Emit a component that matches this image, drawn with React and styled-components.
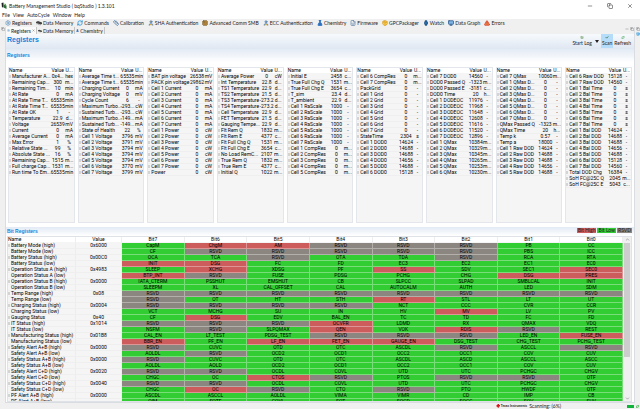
import { useState } from 'react'
import styled, { createGlobalStyle } from 'styled-components'
import {
  Settings, RefreshCw, Check, ChevronUp, ChevronDown, Minus, Copy, X,
  Ruler, User, Cpu, FlaskConical, FileCode, Package, Watch, Monitor, TriangleAlert, Sheet, Chrome
} from 'lucide-react'

const GlobalStyle = createGlobalStyle`
  * { box-sizing: border-box; }
  body {
    margin: 0;
    background: #fff;
    color: #222;
    font-family: 'Lato', 'Liberation Sans', sans-serif;
    font-size: 5px;
    line-height: 6px;
  }
  button {
    font: inherit;
    color: inherit;
    border: 0;
    padding: 0;
    background: none;
    white-space: nowrap;
  }
`

const MemoryIcon = () => (
  <svg width='6' height='6' viewBox='0 0 12 12'>
    <path d='M0 4 L4 2 L12 5 L12 8 L9 9 L0 6Z' fill='#444' />
    <path d='M2 6v3M5 7v3M8 8v3' stroke='#777' strokeWidth='1' />
  </svg>
)

const menus = ['File', 'View', 'AutoCycle', 'Window', 'Help']

const tools = [
  { name: 'Registers', icon: Settings, color: '#6d9cc4' },
  { name: 'Data Memory', icon: MemoryIcon },
  { name: 'Commands', icon: RefreshCw, color: '#1e90d8' },
  { name: 'Calibration', icon: Ruler, color: '#3f6f9f' },
  { name: 'SHA Authentication', icon: User, color: '#3a7bd0', fill: '#f0b93a' },
  { name: 'Advanced Comm SMB', icon: Cpu, color: '#80602a', fill: '#e0a850' },
  { name: 'ECC Authentication', icon: User, color: '#3a7bd0', fill: '#f0b93a' },
  { name: 'Chemistry', icon: FlaskConical, color: '#2a6fc0', fill: '#2a6fc0' },
  { name: 'Firmware', icon: FileCode, color: '#6a8aa8' },
  { name: 'GPCPackager', icon: Package, color: '#d79b1e', fill: '#ffd860' },
  { name: 'Watch', icon: Watch, color: '#1f4f80', fill: '#2a77b8' },
  { name: 'Data Graph', icon: Monitor, color: '#25568c', fill: '#7fb4e4' },
  { name: 'Errors', icon: TriangleAlert, color: '#d23a20', fill: '#f08a50' }
]

const cells = (from, to, suffix, value, unit) => {
  const rows = []
  for (let i = from; i <= to; i++) {
    rows.push([`Cell ${i} ${suffix}`, Array.isArray(value) ? value[i - from] : value, unit])
  }
  return rows
}

const panels = [
  [
    ['Manufacturer A...', '0x4...', 'hex'], ['Remaining Cap...', '300', 'm...'], ['Remaining Tim...', '10', 'min'],
    ['At Rate', '0', 'mA'], ['At Rate Time T...', '65535', 'min'], ['At Rate Time T...', '65535', 'min'],
    ['At Rate OK', '1', '-'], ['Temperature', '22.9', 'd...'], ['Voltage', '26539', 'mV'], ['Current', '0', 'mA'],
    ['Average Current', '0', 'mA'], ['Max Error', '1', '%'], ['Relative State ...', '99', '%'],
    ['Absolute State ...', '16', '%'], ['Remaining Cap...', '1515', 'm...'], ['Full charge Cap...', '1531', 'm...'],
    ['Run time To Em...', '65535', 'min']
  ],
  [
    ['Average Time t...', '65535', 'min'], ['Average Time t...', '65535', 'min'], ['Charging Current', '0', 'mA'],
    ['Charging Voltage', '0', 'mV'], ['Cycle Count', '6', '-'], ['Maximum Turbo...', '-293...', 'cW'],
    ['Sustained Turb...', '-293...', 'cW'], ['Maximum Turbo...', '-149...', 'mA'], ['Sustained Turb...', '-149...', 'mA'],
    ['State of Health', '22', '%'],
    ...cells(1, 7, 'Voltage', ['3796', '3791', '3794', '3794', '3794', '3770', '3799'], 'mV')
  ],
  [
    ['BAT pin voltage', '26538', 'mV'], ['PACK pin voltage', '29862', 'mV'],
    ...cells(1, 7, 'Current', '0', 'mA'), ...cells(1, 7, 'Power', '0', 'cW'), ['Power', '0', 'cW']
  ],
  [
    ['Average Power', '0', 'cW'], ['Int Temperature', '22.8', 'd...'], ['TS1 Temperature', '22.9', 'd...'],
    ['TS2 Temperature', '21.5', 'd...'], ['TS3 Temperature', '-273.2', 'd...'], ['TS4 Temperature', '-273.2', 'd...'],
    ['Cell Temperature', '22.9', 'd...'], ['FET Temperature', '21.5', 'd...'], ['Gauging Tempe...', '22.9', 'd...'],
    ['Flt Rem Q', '1832', 'm...'], ['Flt Rem E', '4377', 'c...'], ['Flt Full Chg Q', '1531', 'm...'],
    ['Flt Full Chg E', '3654', 'c...'], ['No Load RemC...', '2107', 'm...'], ['True Rem Q', '1832', 'm...'],
    ['True Rem E', '4377', 'c...'], ['Initial Q', '1022', 'm...']
  ],
  [
    ['Initial E', '2458', 'c...'], ['True Full Chg Q', '1531', 'm...'], ['True Full Chg E', '3654', 'c...'],
    ['T_sim', '23.4', 'd...'], ['T_ambient', '22.9', 'd...'],
    ...cells(1, 7, 'RaScale', '1000', '-'), ...cells(1, 5, 'CompRes', '0', 'm...')
  ],
  [
    ...cells(6, 7, 'CompRes', '0', 'm...'), ['PackGrid', '0', '-'], ...cells(1, 7, 'Grid', '0', '-'),
    ['StateTime', '2304', 's'],
    ...cells(1, 6, 'DOD0', ['14624', '14688', '14688', '14656', '14688', '15128'], '-')
  ],
  [
    ['Cell 7 DOD0', '14560', '-'], ['DOD0 Passed Q', '-1323', 'm...'], ['DOD0 Passed E', '-3181', 'c...'],
    ['DOD0 Time', '20', 'h...'],
    ...cells(1, 7, 'DODEOC', ['11976', '11968', '11648', '12608', '11616', '11520', '12896'], '-'),
    ...cells(1, 6, 'QMax', ['10384', '10329', '10345', '10265', '10253', '10230'], 'm...')
  ],
  [
    ['Cell 7 QMax', '10060', 'm...'], ...cells(1, 7, 'QMax D...', '0', '-'), ['QMax Passed Q', '-1323', 'm...'],
    ['QMax Time', '20', 'h...'], ['Temp k', '0.57', '-'], ['Temp a', '18000', '-'],
    ...cells(1, 5, 'Raw DOD', ['14624', '14688', '14688', '14656', '14688'], '-')
  ],
  [
    ...cells(6, 7, 'Raw DOD', ['15128', '14560'], '-'), ...cells(1, 7, 'Bal Time', '0', 's'),
    ...cells(1, 7, 'Bal DOD', ['14624', '14688', '14688', '14656', '14688', '15128', '14560'], '-'),
    ['Total DOD Chg', '16384', '-'], ['SoH FC@25C Q', '2045', 'm...'], ['SoH FC@25C E', '5043', 'c...']
  ]
]

// a leading ! marks a bit that is set
const bitRows = [
  ['Battery Mode (high)', '0x6000', 'CapM !ChgM !AM RSVD RSVD RSVD PB CC'],
  ['Battery Mode (low)', '', 'CF RSVD RSVD RSVD RSVD RSVD PBS ICC'],
  ['Battery Status (high)', '0x00C0', 'OCA TCA RSVD OTA TDA RSVD RCA RTA'],
  ['Battery Status (low)', '', '!INIT !DSG FC FD EC3 EC2 EC1 EC0'],
  ['Operation Status A (high)', '0x4983', 'SLEEP !XCHG XDSG PF !SS SDV SEC1 !SEC0'],
  ['Operation Status A (low)', '', '!BTP_INT RSVD FUSE PDSG PCHG CHG !DSG !PRES'],
  ['Operation Status B (high)', '0x0000', 'IATA_CTERM PSSHUT EMSHUT CB SLPCC SLPAD SMBLCAL INIT'],
  ['Operation Status B (low)', '', 'SLEEPM XL CAL_OFFSET CAL AUTOCALM AUTH LED SDM'],
  ['Temp Range (high)', '0x08', 'RSVD RSVD RSVD RSVD RSVD RSVD RSVD RSVD'],
  ['Temp Range (low)', '', 'RSVD OT HT STH !RT STL LT UT'],
  ['Charging Status (high)', '0x0004', 'RSVD RSVD RSVD RSVD NCT CCC CVR CCR'],
  ['Charging Status (low)', '', 'VCT MCHG SU IN HV !MV LV PV'],
  ['Gauging Status', '0x40', 'CF !DSG EDV BAL_EN TC TD FC FD'],
  ['IT Status (high)', '0x1014', 'RSVD RSVD RSVD !OCVFR LDMD RX QMAX VDQ'],
  ['IT Status (low)', '', 'NSFM RSVD SLPQMAX !QEN VOK !RDIS RSVD REST'],
  ['Manufacturing Status (high)', '0x01B8', 'CAL_EN LT_TEST PDSG_TEST RSVD RSVD RSVD LED_EN !FUSE_EN'],
  ['Manufacturing Status (low)', '', '!BBR_EN PF_EN !LF_EN !FET_EN !GAUGE_EN DSG_TEST CHG_TEST PCHG_TEST'],
  ['Safety Alert A+B (high)', '0x0000', 'RSVD CUVC OTD OTC ASCDL RSVD ASCCL RSVD'],
  ['Safety Alert A+B (low)', '', 'AOLDL RSVD OCD2 OCD1 OCC2 OCC1 COV CUV'],
  ['Safety Status A+B (high)', '0x0000', 'RSVD CUVC OTD OTC ASCDL ASCD ASCCL ASCC'],
  ['Safety Status A+B (low)', '', 'AOLDL AOLD OCD2 OCD1 OCC2 OCC1 COV CUV'],
  ['Safety Alert C+D (high)', '0x0020', 'RSVD RSVD OCDL COVL UTD UTC PCHGC CHGV'],
  ['Safety Alert C+D (low)', '', 'CHGC OC !CTOS RSVD PTOS RSVD RSVD OTF'],
  ['Safety Status C+D (high)', '0x0040', 'RSVD RSVD OCDL COVL UTD UTC PCHGC CHGV'],
  ['Safety Status C+D (low)', '', 'CHGC !OC RSVD CTO RSVD PTO HWDF OTF'],
  ['PF Alert A+B (high)', '0x0000', 'ASCDL ASCCL AOLDL VIMA VIMR CD IMP CB'],
  ['PF Alert A+B (low)', '', 'QIM SOTF COVL SOT SOCD SOCC SOV SUV']
]

const bitState = (bit) => {
  if (bit === 'RSVD') return 'rsvd'
  return bit.startsWith('!') ? 'high' : 'low'
}

function RegisterPanel({ rows }) {
  return (
    <Panel>
      <PanelTable>
        <colgroup>
          <col />
          <col className='value' />
          <col className='unit' />
        </colgroup>
        <thead>
          <tr><th>Name</th><th>Value</th><th>U...</th></tr>
        </thead>
        <tbody>
          {rows.map(([name, value, unit], i) => (
            <tr key={i}>
              <td><Expander $open />{name}</td>
              <td>{value}</td>
              <td>{unit}</td>
            </tr>
          ))}
        </tbody>
      </PanelTable>
    </Panel>
  )
}

function BitRegisters() {
  return (
    <BitArea>
      <BitScroll>
        <BitTable>
          <colgroup>
            <col className='name' />
            <col className='value' />
          </colgroup>
          <thead>
            <tr>
              <th>Name</th><th>Value</th>
              {[7, 6, 5, 4, 3, 2, 1, 0].map((n) => <th key={n}>Bit{n}</th>)}
            </tr>
          </thead>
          <tbody>
            {bitRows.map(([name, value, bits]) => (
              <tr key={name}>
                <td><Expander $open={value !== ''} />{name}</td>
                <td>{value}</td>
                {bits.split(' ').map((bit, i) => (
                  <Bit key={i} $state={bitState(bit)}>{bit.replace('!', '')}</Bit>
                ))}
              </tr>
            ))}
          </tbody>
        </BitTable>
      </BitScroll>
      <ScrollBar>
        <button aria-label='Scroll up'><ChevronUp size={5} /></button>
        <ScrollTrack><ScrollThumb /></ScrollTrack>
        <button aria-label='Scroll down'><ChevronDown size={5} /></button>
      </ScrollBar>
    </BitArea>
  )
}

function App() {
  const [scanning, setScanning] = useState(true)

  return (
    <Window>
      <GlobalStyle />
      <TitleBar>
        <svg width='6' height='8' viewBox='0 0 12 16'>
          <path d='M1 2l4-1v9l-3 1z' fill='#222' />
          <path d='M5 5l6 2v7l-6-3z' fill='#2c6b35' />
          <path d='M7 3l3 1v3l-3-1z' fill='#5fae4a' />
        </svg>
        <span>Battery Management Studio ( bqStudio ) 1.3.101</span>
        <WindowButtons>
          <button aria-label='Minimize'><Minus size={6} /></button>
          <button aria-label='Restore'><Copy size={6} /></button>
          <button aria-label='Close'><X size={6} /></button>
        </WindowButtons>
      </TitleBar>
      <MenuBar>
        {menus.map((menu) => <button key={menu}>{menu}</button>)}
      </MenuBar>
      <ToolBar>
        {tools.map(({ name, icon: Icon, color, fill }) => (
          <ToolButton key={name}>
            <Icon size={6} color={color} fill={fill || 'none'} strokeWidth={3} />
            {name}
          </ToolButton>
        ))}
      </ToolBar>
      <Workspace>
        <SideStrip><Copy size={4} /></SideStrip>
        <Editor>
          <TabBar>
            <Tab $active><Settings size={3} color='#4a90c8' />Registers<X size={3} /></Tab>
            <Tab><MemoryIconSmall><MemoryIcon /></MemoryIconSmall>Data Memory</Tab>
            <Tab><FlaskConical size={3} color='#2a6fc0' fill='#2a6fc0' />Chemistry</Tab>
            <TabTools><Minus size={4} /><Copy size={4} /></TabTools>
          </TabBar>
          <Header>
            <h1>Registers</h1>
            <Actions>
              <ActionButton><Sheet size={4} color='#5a8f4a' />Start Log</ActionButton>
              <DropArrow aria-label='Log options'>
                <svg width='4' height='3' viewBox='0 0 4 3'><path d='M0 0h4l-2 3z' fill='#222' /></svg>
              </DropArrow>
              <ActionButton $active={scanning} onClick={() => setScanning(!scanning)}>
                <Check size={4} color='#1d6b2a' strokeWidth={6} />Scan
              </ActionButton>
              <ActionButton><RefreshCw size={4} color='#3aa04a' strokeWidth={3} />Refresh</ActionButton>
            </Actions>
          </Header>
          <SectionTitle $tall><h2>Registers</h2></SectionTitle>
          <Panels>
            {panels.map((rows, i) => <RegisterPanel key={i} rows={rows} />)}
          </Panels>
          <SectionTitle>
            <h2>Bit Registers</h2>
            <Legend>
              <LegendItem $state='high'>Bit High</LegendItem>
              <LegendItem $state='low'>Bit Low</LegendItem>
              <LegendItem $state='rsvd'>RSVD</LegendItem>
            </Legend>
          </SectionTitle>
          <BitRegisters />
        </Editor>
        <SideStrip><Copy size={4} /><Chrome size={4} color='#1e90d8' /></SideStrip>
      </Workspace>
      <StatusBar>
        <Brand>
          <svg width='4' height='4' viewBox='0 0 8 8'>
            <path d='M2 1h2V0h2v2h2v3H6l-1 3H4L3 6 0 4V3h2z' fill='#d8151c' />
          </svg>
          Texas Instruments
        </Brand>
        <span>Scanning: (6%)</span>
        <Progress />
        <RefreshCw size={3} color='#2fae3c' strokeWidth={4} />
      </StatusBar>
    </Window>
  )
}

export default App

const stateColors = {
  high: '#cd5c5c',
  low: '#32cd32',
  rsvd: '#8b8680'
}

const Window = styled.div`
  height: 100vh;
  display: flex;
  flex-direction: column;
  overflow: hidden;
`

const TitleBar = styled.header`
  display: flex;
  align-items: center;
  gap: 2px;
  height: 11px;
  padding: 0 7px 0 1px;
  flex: none;
`

const WindowButtons = styled.div`
  display: flex;
  gap: 14px;
  margin-left: auto;

  button {
    display: flex;
  }
`

const MenuBar = styled.nav`
  display: flex;
  gap: 3px;
  height: 8px;
  padding: 0 2px;
  flex: none;
`

const ToolBar = styled.div`
  display: flex;
  align-items: center;
  gap: 4px;
  height: 8px;
  padding: 0 5px;
  background: #f0f0f0;
  flex: none;
`

const ToolButton = styled.button`
  display: flex;
  align-items: center;
  gap: 1px;
`

const Workspace = styled.div`
  display: flex;
  flex: 1;
  min-height: 0;
  background: #f0f0f0;
`

const SideStrip = styled.aside`
  display: flex;
  flex-direction: column;
  align-items: center;
  gap: 1px;
  width: 5px;
  flex: none;
  color: #555;
`

const Editor = styled.main`
  display: flex;
  flex-direction: column;
  flex: 1;
  min-width: 0;
  background: #fff;
  border: 1px solid #d9dde2;
  border-top: 0;
`

const TabBar = styled.div`
  display: flex;
  height: 7px;
  background: #f0f0f0;
  flex: none;
`

const Tab = styled.button`
  display: flex;
  align-items: center;
  gap: 1px;
  padding: 0 1px;
  border-right: 1px solid #c4c4c4;
  background: ${({ $active }) => ($active ? '#fafafa' : 'none')};
`

const MemoryIconSmall = styled.span`
  display: flex;

  svg {
    width: 4px;
    height: 4px;
  }
`

const TabTools = styled.div`
  display: flex;
  gap: 1px;
  margin-left: auto;
  color: #555;
`

const Header = styled.div`
  display: flex;
  justify-content: space-between;
  height: 15px;
  padding: 0 2px 0 1px;
  background: linear-gradient(#f7fafd, #dfe7f2);
  flex: none;

  h1 {
    margin: 2px 0 0;
    color: #1583dc;
    font: bold 7px/8px 'Liberation Sans', sans-serif;
  }
`

const Actions = styled.div`
  display: flex;
`

const ActionButton = styled.button`
  display: flex;
  flex-direction: column;
  align-items: center;
  gap: 1px;
  height: 14px;
  padding: 2px 1px;
  background: ${({ $active }) => ($active ? '#b5dcf8' : 'none')};
`

const DropArrow = styled.button`
  display: flex;
  align-items: center;
  padding: 0 2px;
`

const SectionTitle = styled.div`
  display: flex;
  align-items: center;
  justify-content: space-between;
  height: ${({ $tall }) => ($tall ? '13px' : '9px')};
  margin-bottom: ${({ $tall }) => ($tall ? '5px' : '0')};
  padding: 0 2px 2px 1px;
  background: linear-gradient(#e2eaf4, #fff);
  flex: none;

  h2 {
    margin: 0;
    color: #1583dc;
    font: bold 5px/6px 'Liberation Sans', sans-serif;
  }
`

const Panels = styled.section`
  display: grid;
  grid-template-columns: repeat(9, 1fr);
  gap: 3px;
  height: 156px;
  margin: 0 2px 4px;
  flex: none;
`

const Panel = styled.div`
  min-width: 0;
  overflow: hidden;
  background: #f5f5f5;
  border: 1px solid #e3e6ea;
`

const RegisterTable = styled.table`
  width: 100%;
  table-layout: fixed;
  border-collapse: separate;
  border-spacing: 0;
  color: #000;
  font-family: 'Roboto', 'Liberation Sans', sans-serif;
  font-size: 5px;
  line-height: 5px;

  th {
    padding: 0;
    font-weight: normal;
    background: #fff;
    border-right: 1px solid #eee;
    border-bottom: 1px solid #f5f5f5;
  }
  td {
    padding: 0;
    text-align: center;
    white-space: nowrap;
    border-right: 1px solid #ededed;
    border-bottom: 1px solid #efefef;
  }
  th:first-child, td:first-child {
    text-align: left;
  }
`

const PanelTable = styled(RegisterTable)`
  th, td {
    border-right: 0;
  }
  .value {
    width: 14px;
  }
  .unit {
    width: 9px;
  }
`

const Expander = styled.span`
  display: inline-block;
  width: 2px;
  height: 3px;
  margin-right: 1px;
  background: ${({ $open }) => ($open ? '#d4d4d4' : 'none')};
`

const Legend = styled.div`
  display: flex;
  gap: 1px;
`

const LegendItem = styled.span`
  padding: 0 1px;
  line-height: 5px;
  background: ${({ $state }) => stateColors[$state]};
`

const BitArea = styled.section`
  display: flex;
  flex: 1;
  min-height: 0;
  margin: 0 2px 0 1px;
  border: 1px solid #dfe2e6;
`

const BitScroll = styled.div`
  flex: 1;
  overflow: hidden;
  background: #f5f5f5;
`

const BitTable = styled(RegisterTable)`
  .name {
    width: 68px;
  }
  .value {
    width: 46px;
  }
`

const Bit = styled.td`
  && {
    background: ${({ $state }) => stateColors[$state]};
    border-color: rgba(255, 255, 255, 0.35);
  }
`

const ScrollBar = styled.div`
  display: flex;
  flex-direction: column;
  width: 8px;
  background: #f0f0f0;
  flex: none;

  button {
    display: flex;
    justify-content: center;
    color: #555;
  }
`

const ScrollTrack = styled.div`
  flex: 1;
  padding: 1px;
`

const ScrollThumb = styled.div`
  height: 75%;
  background: #cdcdcd;
`

const StatusBar = styled.footer`
  display: flex;
  align-items: center;
  justify-content: flex-end;
  gap: 2px;
  height: 6px;
  padding-right: 1px;
  background: #f0f0f0;
  flex: none;
`

const Brand = styled.span`
  display: flex;
  align-items: center;
  gap: 1px;
  font: bold 3px/4px 'Liberation Sans', sans-serif;
`

const Progress = styled.div`
  width: 7px;
  height: 3px;
  margin-left: 64px;
  background: #12b33a;
`
